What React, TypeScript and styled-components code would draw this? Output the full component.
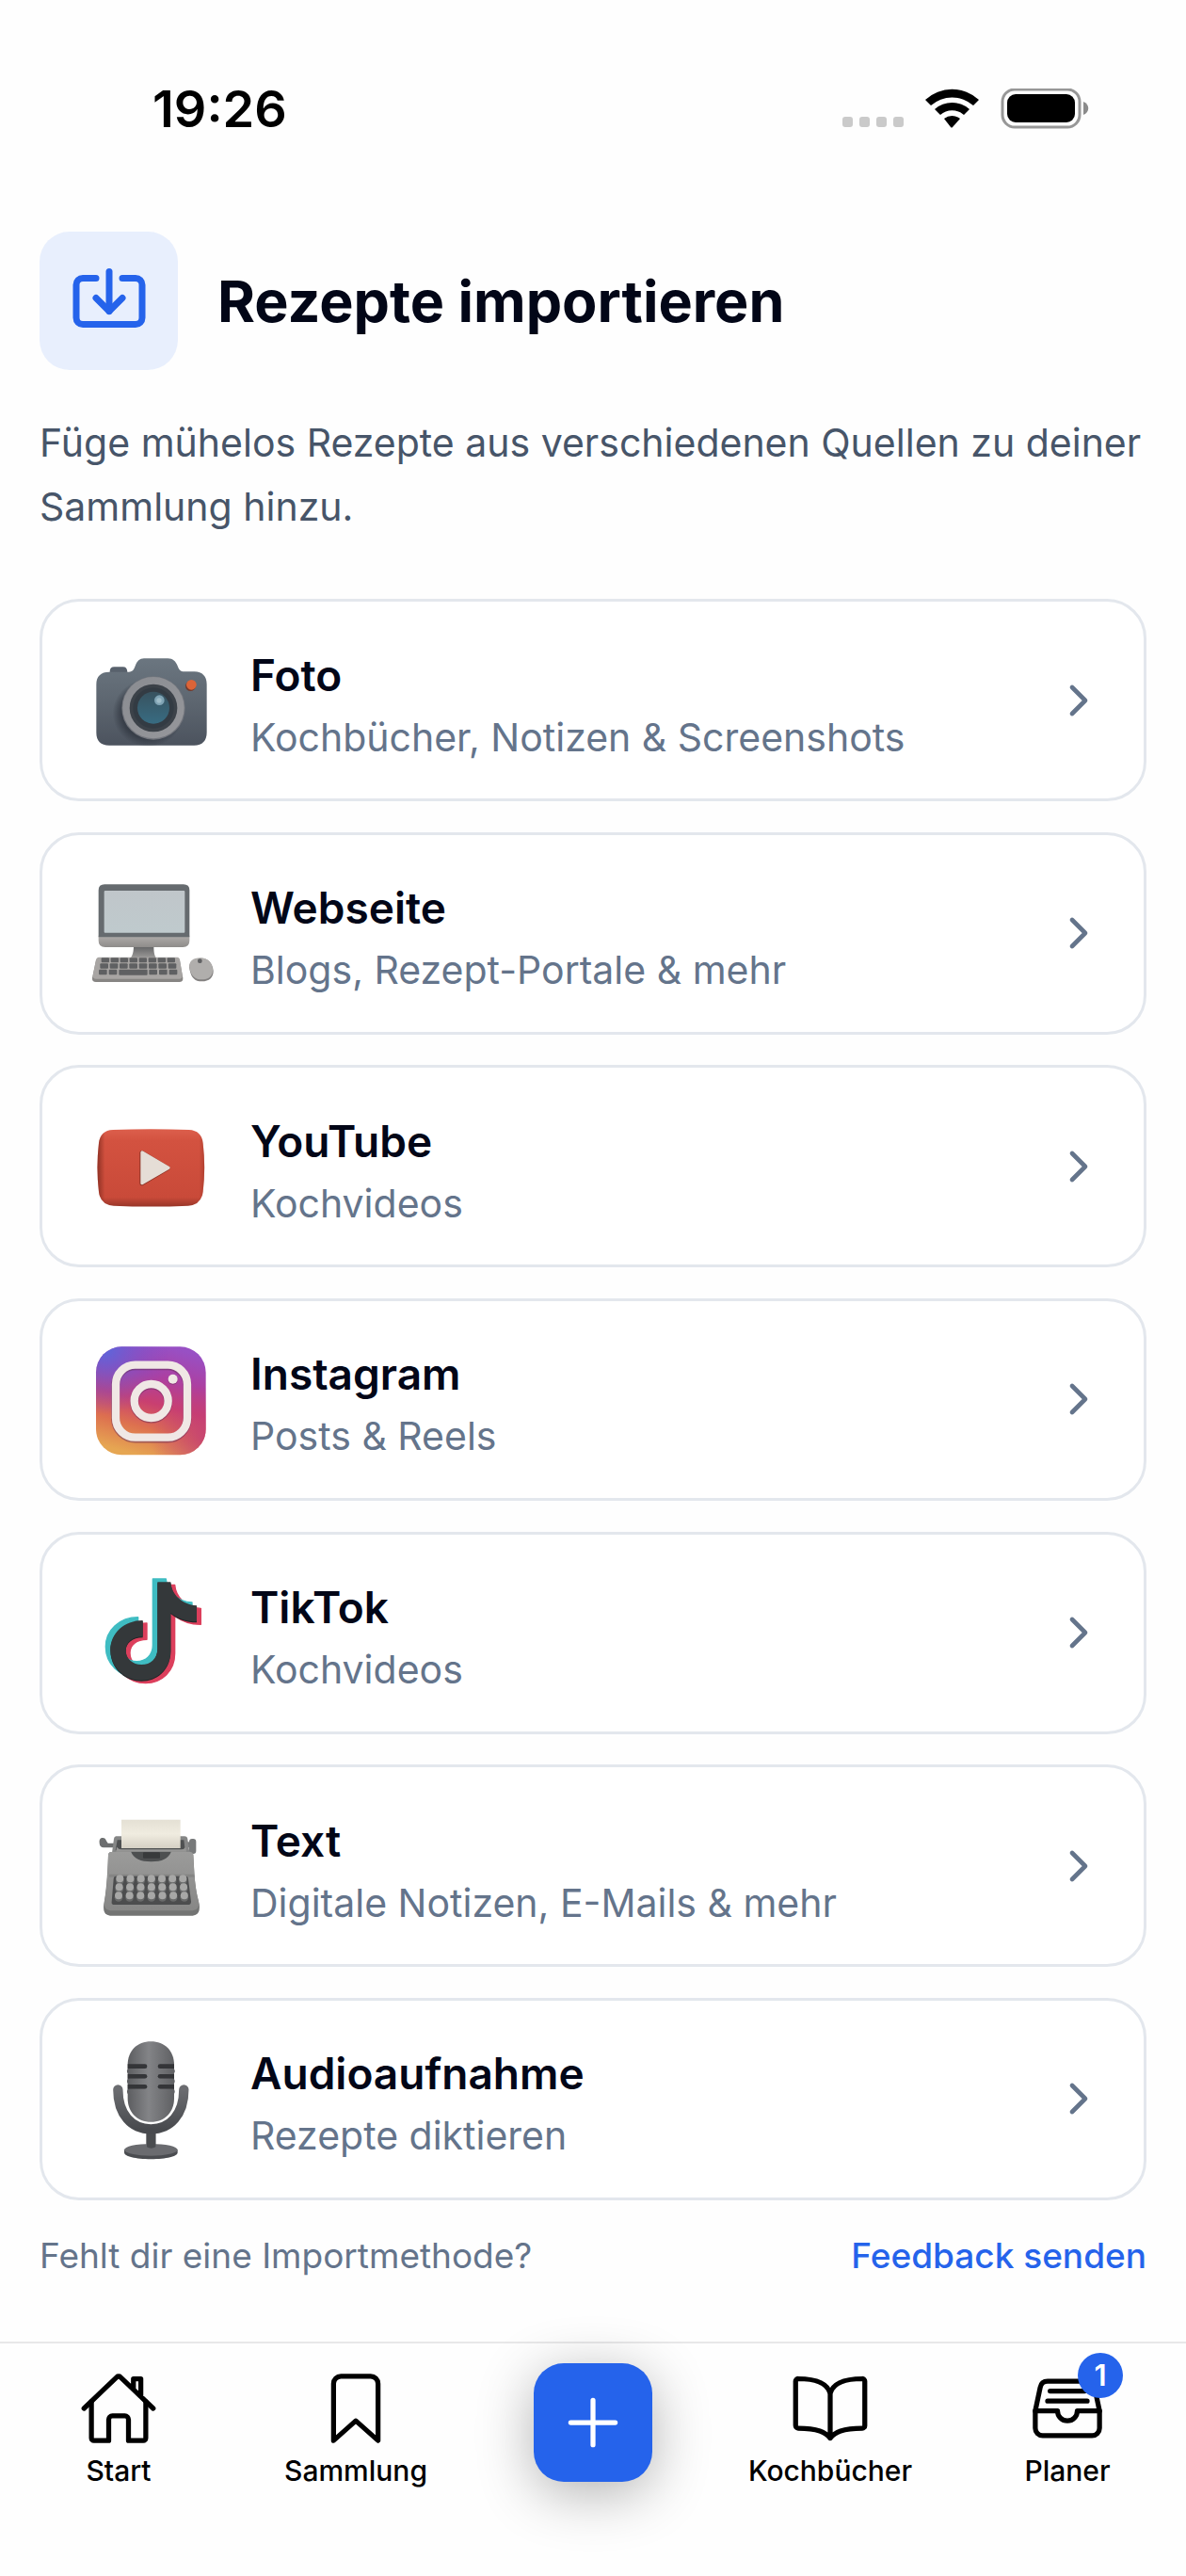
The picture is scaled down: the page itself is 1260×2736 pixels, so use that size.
import React from "react";
import styled, { createGlobalStyle } from "styled-components";
import { ChevronRight, Import } from "lucide-react";
import {
  IoAddOutline,
  IoBookmarkOutline,
  IoBookOutline,
  IoFileTrayFullOutline,
  IoHomeOutline,
} from "react-icons/io5";

const colors = {
  ink: "#020617",
  text: "#475569",
  muted: "#64748b",
  border: "#e3e7ed",
  primary: "#2563eb",
  primarySoft: "#e8effd",
};

const GlobalStyle = createGlobalStyle`
  * {
    box-sizing: border-box;
  }

  body {
    margin: 0;
    background: #fefefe;
    color: ${colors.ink};
    font-family: Inter, "Liberation Sans", sans-serif;
    -webkit-font-smoothing: antialiased;
  }

  h1, h2, p, ul {
    margin: 0;
    padding: 0;
  }
`;

const Screen = styled.div`
  display: flex;
  flex-direction: column;
  min-height: 100vh;
`;

const StatusBar = styled.div`
  display: flex;
  align-items: center;
  justify-content: space-between;
  padding: 84px 103px 98px 162px;
`;

const Clock = styled.time`
  color: #000;
  font-size: 54px;
  font-weight: 600;
  line-height: 64px;
`;

const StatusIcons = styled.svg`
  display: block;
  width: 262px;
  height: 44px;
`;

const Main = styled.main`
  display: flex;
  flex: 1;
  flex-direction: column;
  padding: 0 42px;
`;

const Header = styled.header`
  display: flex;
  align-items: center;
  gap: 42px;
`;

const HeaderIcon = styled.div`
  display: flex;
  align-items: center;
  justify-content: center;
  width: 147px;
  height: 147px;
  border-radius: 32px;
  background: ${colors.primarySoft};
  color: ${colors.primary};
`;

const Title = styled.h1`
  font-size: 61px;
  font-weight: 700;
  line-height: 74px;
`;

const Intro = styled.p`
  margin-top: 43px;
  color: ${colors.text};
  font-size: 41px;
  line-height: 68px;
`;

const SourceList = styled.ul`
  display: flex;
  flex: 1;
  flex-direction: column;
  justify-content: space-between;
  gap: 32px;
  margin: 64px 0 31px;
  list-style: none;
`;

const SourceCard = styled.button`
  display: flex;
  align-items: center;
  gap: 36px;
  width: 100%;
  min-height: 215px;
  padding: 0 41px 0 45px;
  border: 3px solid ${colors.border};
  border-radius: 42px;
  background: #fff;
  color: ${colors.muted};
  font-family: inherit;
  text-align: left;
  cursor: pointer;
`;

const Art = styled.svg`
  flex: none;
  width: 140px;
  height: 140px;
`;

const SourceText = styled.span`
  display: flex;
  flex: 1;
  flex-direction: column;
  padding-top: 12px;
`;

const SourceName = styled.span`
  color: ${colors.ink};
  font-size: 46px;
  font-weight: 600;
  line-height: 66px;
`;

const SourceHint = styled.span`
  font-size: 41px;
  line-height: 66px;
`;

const FeedbackRow = styled.div`
  display: flex;
  justify-content: space-between;
  margin-bottom: 63px;
  color: ${colors.muted};
  font-size: 37px;
  line-height: 56px;
`;

const FeedbackLink = styled.a`
  color: ${colors.primary};
  font-weight: 500;
  text-decoration: none;
`;

const TabBar = styled.nav`
  display: grid;
  grid-template-columns: repeat(5, 1fr);
  justify-items: center;
  min-height: 249px;
  border-top: 2px solid #e8e8e9;
`;

const Tab = styled.a`
  display: flex;
  flex-direction: column;
  align-items: center;
  gap: 6px;
  padding-top: 27px;
  color: #000;
  font-size: 30px;
  font-weight: 500;
  line-height: 36px;
  text-decoration: none;
`;

const TabIcon = styled.span`
  position: relative;
  display: flex;
`;

const Badge = styled.span`
  position: absolute;
  top: -17px;
  right: -17px;
  width: 48px;
  height: 48px;
  border-radius: 50%;
  background: ${colors.primary};
  color: #fff;
  font-size: 31px;
  font-weight: 600;
  line-height: 48px;
  text-align: center;
`;

const AddButton = styled.button`
  display: flex;
  align-items: center;
  justify-content: center;
  width: 126px;
  height: 126px;
  margin-top: 21px;
  padding: 0;
  border: 0;
  border-radius: 32px;
  background: ${colors.primary};
  color: #fff;
  box-shadow: 0 12px 60px rgba(0, 0, 0, 0.3);
  cursor: pointer;
`;

const CameraArt = () => (
  <Art viewBox="90 39 420 420" aria-hidden="true">
    <defs>
      <linearGradient id="cam-body" x1="0" y1="0" x2="0" y2="1">
        <stop offset="0" stopColor="#6b7680" />
        <stop offset="0.5" stopColor="#5d6670" />
        <stop offset="1" stopColor="#4c535e" />
      </linearGradient>
      <radialGradient id="cam-shade">
        <stop offset="0.75" stopColor="#2f353f" stopOpacity="0.75" />
        <stop offset="1" stopColor="#2f353f" stopOpacity="0" />
      </radialGradient>
      <linearGradient id="cam-lens" x1="0" y1="0" x2="0" y2="1">
        <stop offset="0" stopColor="#38525f" />
        <stop offset="1" stopColor="#386c82" />
      </linearGradient>
      <linearGradient id="cam-ring" x1="0" y1="0" x2="1" y2="1">
        <stop offset="0" stopColor="#8a8c91" />
        <stop offset="1" stopColor="#96979b" />
      </linearGradient>
    </defs>
    <path d="M170 168v-12q0-14 14-14h28q13 0 14 16v10z" fill="#58616c" />
    <path
      d="M168 158h62c14 0 17-8 21-19 6-16 14-24 28-24h76c16 0 25 9 31 24 5 12 8 18 22 18h32c25 0 39 16 39 40v154c0 26-14 41-40 41H168c-27 0-41-14-41-41V198c0-26 14-40 41-40z"
      fill="url(#cam-body)"
    />
    <ellipse cx="292" cy="289" rx="113" ry="108" fill="url(#cam-shade)" />
    <circle cx="309" cy="273" r="101" fill="#73767d" />
    <circle cx="309" cy="272" r="98" fill="url(#cam-ring)" />
    <circle cx="309" cy="273" r="76" fill="#3c4249" />
    <circle cx="309" cy="273" r="65" fill="#333b43" />
    <circle cx="309" cy="272" r="51" fill="url(#cam-lens)" />
    <circle cx="328" cy="248" r="16" fill="#7fa3b4" />
    <circle cx="327" cy="249" r="8" fill="#9fbdc9" />
    <circle cx="427" cy="203" r="16" fill="#713b2e" />
    <circle cx="430" cy="199" r="16" fill="#dc6438" />
  </Art>
);

const keyColumns = [0, 1, 2, 3, 4, 5, 6, 7];

const ComputerArt = () => (
  <Art viewBox="30 2 420 420" aria-hidden="true">
    <defs>
      <linearGradient id="pc-screen" x1="0" y1="0" x2="0" y2="1">
        <stop offset="0" stopColor="#c0c6ca" />
        <stop offset="1" stopColor="#bfcacd" />
      </linearGradient>
      <linearGradient id="pc-base" x1="0" y1="0" x2="0" y2="1">
        <stop offset="0" stopColor="#b0adab" />
        <stop offset="1" stopColor="#8e8c8a" />
      </linearGradient>
      <linearGradient id="pc-stand" x1="0" y1="0" x2="0" y2="1">
        <stop offset="0" stopColor="#5f6062" />
        <stop offset="1" stopColor="#a5a3a1" />
      </linearGradient>
    </defs>
    <path d="M186 252h64c0 22 2 34 12 46h-90c10-12 14-24 14-46z" fill="url(#pc-stand)" />
    <path d="M74 220h290v16q0 21-21 21H95q-21 0-21-21z" fill="url(#pc-base)" />
    <path d="M74 225V76q0-19 19-19h252q19 0 19 19v149z" fill="#666b6f" />
    <rect x="92" y="77" width="257" height="134" rx="3" fill="url(#pc-screen)" />
    <path d="M75 291h250q7 0 8 8l10 56q1 13-12 13H66q-13 0-12-13l12-56q2-8 9-8z" fill="#878583" />
    <path d="M75 289h250q7 0 8 8l8 50q1 11-10 11H66q-11 0-10-11l10-50q2-8 9-8z" fill="#a8a5a3" />
    <g fill="#5f6062">
      {keyColumns.map((n) => (
        <React.Fragment key={n}>
          <rect x={83 + n * 30} y="291" width="25" height="15" rx="3" />
          <rect x={79 + n * 31} y="309" width="26" height="16" rx="3" />
          {(n < 2 || n > 4) && (
            <rect x={75 + n * 32} y="328" width="26" height="17" rx="3" />
          )}
        </React.Fragment>
      ))}
      <rect x="139" y="328" width="91" height="18" rx="3" />
    </g>
    <path d="M402 292c22 0 36 17 38 40 1 22-14 34-36 34-24 0-34-13-39-35-7-28 12-39 37-39z" fill="#838180" />
    <path d="M399 291c22 0 37 15 39 37 1 21-14 32-35 32-22 0-33-12-38-32-6-26 10-37 34-37z" fill="#b0aeac" />
    <rect x="390" y="294" width="14" height="14" rx="6" fill="#606163" />
  </Art>
);

const playBadgePath =
  "M120 87q120-4 242 0 41 2 45 43 9 77 0 154-5 42-47 45-119 5-238 0-42-3-47-44-9-78 0-156 5-40 45-42z";

const YouTubeArt = () => (
  <Art viewBox="30 -6 420 420" aria-hidden="true">
    <defs>
      <linearGradient id="yt-body" x1="0" y1="0" x2="0" y2="1">
        <stop offset="0" stopColor="#dc5f4c" />
        <stop offset="0.15" stopColor="#d35240" />
        <stop offset="0.88" stopColor="#c94a39" />
        <stop offset="1" stopColor="#983629" />
      </linearGradient>
      <linearGradient id="yt-edge">
        <stop offset="0" stopColor="#7c291d" stopOpacity="0.75" />
        <stop offset="0.07" stopColor="#7c291d" stopOpacity="0" />
        <stop offset="0.95" stopColor="#7c291d" stopOpacity="0" />
        <stop offset="1" stopColor="#7c291d" stopOpacity="0.35" />
      </linearGradient>
    </defs>
    <path d={playBadgePath} fill="url(#yt-body)" />
    <path d={playBadgePath} fill="url(#yt-edge)" />
    <path d="M212 160v98l83-49z" fill="#8e3427" stroke="#8e3427" strokeWidth="14" strokeLinejoin="round" />
    <path d="M213 159v98l84-49z" fill="#e5ddd6" stroke="#e5ddd6" strokeWidth="10" strokeLinejoin="round" />
  </Art>
);

const InstagramArt = () => (
  <Art viewBox="30 17 420 420" aria-hidden="true">
    <defs>
      <linearGradient id="ig-body" x1="0.65" y1="0" x2="0.38" y2="1">
        <stop offset="0" stopColor="#9850c4" />
        <stop offset="0.28" stopColor="#ad3fa0" />
        <stop offset="0.52" stopColor="#c93f70" />
        <stop offset="0.75" stopColor="#dd714f" />
        <stop offset="1" stopColor="#e6a652" />
      </linearGradient>
      <radialGradient id="ig-blue" cx="0.08" cy="0.02" r="0.6">
        <stop offset="0" stopColor="#5b67dc" />
        <stop offset="1" stopColor="#7a4fd0" stopOpacity="0" />
      </radialGradient>
      <radialGradient id="ig-pink" cx="1" cy="0.85" r="0.5">
        <stop offset="0" stopColor="#c23c78" stopOpacity="0.8" />
        <stop offset="1" stopColor="#c23c78" stopOpacity="0" />
      </radialGradient>
    </defs>
    <rect x="66" y="60" width="350" height="345" rx="82" fill="url(#ig-body)" />
    <rect x="66" y="60" width="350" height="345" rx="82" fill="url(#ig-blue)" />
    <rect x="66" y="60" width="350" height="345" rx="82" fill="url(#ig-pink)" />
    <g fill="none" stroke="#682d59" strokeOpacity="0.5">
      <rect x="128" y="121" width="229" height="232" rx="64" strokeWidth="27" />
      <circle cx="242" cy="236" r="54" strokeWidth="27" />
    </g>
    <g fill="none" stroke="#f0e8e5">
      <rect x="129" y="118" width="228" height="231" rx="62" strokeWidth="25" />
      <circle cx="242" cy="233" r="54" strokeWidth="25" />
    </g>
    <circle cx="311" cy="166" r="15" fill="#682d59" fillOpacity="0.5" />
    <circle cx="311" cy="163" r="15" fill="#f0e8e5" />
  </Art>
);

const notePath =
  "M262 58h42c3 40 36 72 83 75v51c-32 0-60-9-83-28v120c0 56-40 95-93 95-55 0-99-42-99-97 0-53 44-94 103-94v52c-32 0-54 17-54 43 0 27 22 46 50 46 29 0 51-20 51-52z";

const TikTokArt = () => (
  <Art viewBox="30 9 420 420" aria-hidden="true">
    <path d={notePath} fill="#dc3f5c" stroke="#dc3f5c" strokeWidth="4" strokeLinejoin="round" transform="translate(13 9)" />
    <path d={notePath} fill="#3fbcc2" stroke="#3fbcc2" strokeWidth="4" strokeLinejoin="round" transform="translate(-15 -10)" />
    <path d={notePath} fill="#202426" transform="translate(0 3)" />
    <path d={notePath} fill="#34383a" />
  </Art>
);

const typeRows = [254, 281, 308];

const TypewriterArt = () => (
  <Art viewBox="30 2 420 420" aria-hidden="true">
    <defs>
      <linearGradient id="tw-paper" x1="0" y1="0" x2="0" y2="1">
        <stop offset="0" stopColor="#e4e0d4" />
        <stop offset="0.5" stopColor="#f0ece0" />
        <stop offset="1" stopColor="#d5d0c4" />
      </linearGradient>
      <linearGradient id="tw-body" x1="0" y1="0" x2="0" y2="1">
        <stop offset="0" stopColor="#9b9b9a" />
        <stop offset="1" stopColor="#878786" />
      </linearGradient>
    </defs>
    <path d="M84 122q12-2 15 10l5 7h20v14H90q-12-1-13-14-2-14 7-17z" fill="#6c6e6f" />
    <rect x="350" y="135" width="20" height="18" fill="#77797a" />
    <rect x="363" y="125" width="22" height="48" rx="9" fill="#77797a" />
    <path d="M130 117h218q9 0 10 9l6 44H117l6-45q1-8 7-8z" fill="#858686" />
    <path d="M134 129h212l4 33H128z" fill="#4e5051" />
    <path d="M115 167h251q9 0 10 10l4 68q4 50 15 88 5 35-21 37H111q-25-2-20-37 10-50 14-156 1-10 10-10z" fill="#737473" />
    <path d="M115 167h251q9 0 10 10l3 58q4 55 14 88 5 29-19 31H111q-23-2-18-31 10-50 12-146 1-10 10-10z" fill="url(#tw-body)" />
    <path d="M108 238h270l2 9H108z" fill="#858584" />
    <path d="M177 165h129c-8 24-31 33-64 33s-57-9-65-33z" fill="#4d4f50" />
    <rect x="216" y="168" width="54" height="19" rx="3" fill="#383a3b" />
    <path d="M147 64h188v91H147z" fill="url(#tw-paper)" />
    <path d="M132 151q6 8 16 8h190q8 0 14-8l2 15H130z" fill="#969695" />
    <path d="M129 244h222q9 0 9 9l9 72q0 10-10 10H125q-11 0-9-10l6-72q1-9 7-9z" fill="#4c4d4e" />
    {typeRows.map((y, row) =>
      [0, 1, 2, 3, 4, 5, 6].map((n) => (
        <g key={`${y}-${n}`}>
          <circle cx={142 - row * 2 + n * (33.5 + row * 0.7)} cy={y + 4} r="13" fill="#696a6a" />
          <circle cx={142 - row * 2 + n * (33.5 + row * 0.7)} cy={y - 2} r="12" fill="#a7a7a6" />
        </g>
      ))
    )}
  </Art>
);

const MicrophoneArt = () => (
  <Art viewBox="30 24 420 420" aria-hidden="true">
    <defs>
      <linearGradient id="mic-body">
        <stop offset="0" stopColor="#5c5d60" />
        <stop offset="0.45" stopColor="#838487" />
        <stop offset="1" stopColor="#5f6063" />
      </linearGradient>
      <linearGradient id="mic-stand" x1="0" y1="0" x2="0" y2="1">
        <stop offset="0" stopColor="#6b6c70" />
        <stop offset="1" stopColor="#484a4e" />
      </linearGradient>
    </defs>
    <rect x="226" y="335" width="30" height="60" fill="#46484b" />
    <path d="M156 398v8c0 12 36 21 85 21s85-9 85-21v-8z" fill="#4a4c50" />
    <ellipse cx="241" cy="397" rx="85" ry="19" fill="#6a6b6f" />
    <path d="M228 344h28v44q-14 8-28 0z" fill="#4a4c4f" />
    <path
      d="M136 205c0 79 43 126 105 126s105-47 105-126"
      fill="none"
      stroke="url(#mic-stand)"
      strokeWidth="31"
      strokeLinecap="round"
    />
    <path d="M167 126c0-44 30-74 74-74s74 30 74 74v107c0 44-30 75-74 75s-74-31-74-75z" fill="url(#mic-body)" />
    {[124, 156, 189].map((y) => (
      <React.Fragment key={y}>
        <path d={`M167 ${y}h55q7 0 7 7t-7 7h-55z`} fill="#343538" />
        <path d={`M315 ${y}h-45q-7 0-7 7t7 7h45z`} fill="#343538" />
        <rect x="165" y={y + 14} width="152" height="17" rx="7" fill="url(#mic-body)" />
      </React.Fragment>
    ))}
  </Art>
);

const sources = [
  { name: "Foto", hint: "Kochbücher, Notizen & Screenshots", art: <CameraArt /> },
  { name: "Webseite", hint: "Blogs, Rezept-Portale & mehr", art: <ComputerArt /> },
  { name: "YouTube", hint: "Kochvideos", art: <YouTubeArt /> },
  { name: "Instagram", hint: "Posts & Reels", art: <InstagramArt /> },
  { name: "TikTok", hint: "Kochvideos", art: <TikTokArt /> },
  { name: "Text", hint: "Digitale Notizen, E-Mails & mehr", art: <TypewriterArt /> },
  { name: "Audioaufnahme", hint: "Rezepte diktieren", art: <MicrophoneArt /> },
];

const App: React.FC = () => {
  return (
    <>
      <GlobalStyle />
      <Screen>
        <StatusBar>
          <Clock>19:26</Clock>
          <StatusIcons viewBox="0 0 262 44" aria-hidden="true">
            <g fill="#cacaca">
              {[0, 18, 36, 54].map((x) => (
                <rect key={x} x={x} y="30" width="11" height="11" rx="3" />
              ))}
            </g>
            <path d="M88 12a42 42 0 0 1 57 0l-6 6a34 34 0 0 0-45 0z" />
            <path d="M98 22a28 28 0 0 1 37 0l-6 6a19 19 0 0 0-25 0z" />
            <path d="M108 32a14 14 0 0 1 17 0l-8 9q-1 1-2 0z" />
            <rect x="170" y="1" width="82" height="40" rx="13" fill="none" stroke="#979797" strokeWidth="3" />
            <rect x="175" y="6" width="72" height="30" rx="9" />
            <path d="M256 14c7 3 7 11 0 14z" fill="#8b8b8b" />
          </StatusIcons>
        </StatusBar>

        <Main>
          <Header>
            <HeaderIcon>
              <Import size={84} />
            </HeaderIcon>
            <Title>Rezepte importieren</Title>
          </Header>
          <Intro>
            Füge mühelos Rezepte aus verschiedenen Quellen zu deiner Sammlung hinzu.
          </Intro>

          <SourceList>
            {sources.map(({ name, hint, art }) => (
              <li key={name}>
                <SourceCard type="button">
                  {art}
                  <SourceText>
                    <SourceName>{name}</SourceName>
                    <SourceHint>{hint}</SourceHint>
                  </SourceText>
                  <ChevronRight size={56} />
                </SourceCard>
              </li>
            ))}
          </SourceList>

          <FeedbackRow>
            <p>Fehlt dir eine Importmethode?</p>
            <FeedbackLink href="#feedback">Feedback senden</FeedbackLink>
          </FeedbackRow>
        </Main>

        <TabBar>
          <Tab href="#start">
            <IoHomeOutline size={84} />
            Start
          </Tab>
          <Tab href="#sammlung">
            <IoBookmarkOutline size={84} />
            Sammlung
          </Tab>
          <AddButton type="button" aria-label="Rezept hinzufügen">
            <IoAddOutline size={84} />
          </AddButton>
          <Tab href="#kochbuecher">
            <IoBookOutline size={84} />
            Kochbücher
          </Tab>
          <Tab href="#planer">
            <TabIcon>
              <IoFileTrayFullOutline size={84} />
              <Badge>1</Badge>
            </TabIcon>
            Planer
          </Tab>
        </TabBar>
      </Screen>
    </>
  );
};

export default App;
